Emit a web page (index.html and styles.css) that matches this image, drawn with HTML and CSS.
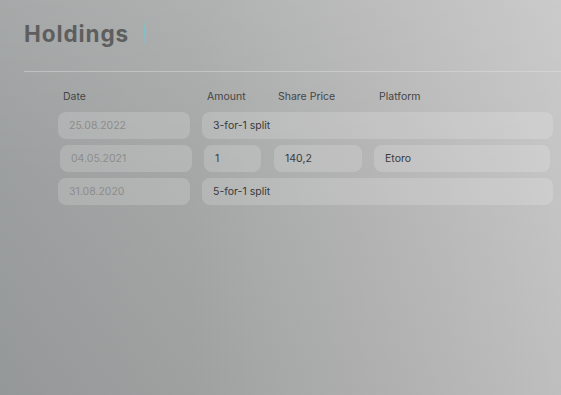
FILE: index.html
```html
<!DOCTYPE html>
<html lang="en">
<head>
<meta charset="utf-8">
<title>Holdings</title>
<link rel="stylesheet" href="styles.css">
</head>
<body>
  <main class="panel">
    <header class="title-bar">
      <h1 class="title">Holdings</h1>
      <span class="caret"></span>
    </header>
    <hr class="divider">
    <section class="holdings">
      <div class="head-row">
        <span class="col-date">Date</span>
        <span class="col-amount">Amount</span>
        <span class="col-price">Share Price</span>
        <span class="col-platform">Platform</span>
      </div>
      <div class="row">
        <div class="field date">25.08.2022</div>
        <div class="field wide">3-for-1 split</div>
      </div>
      <div class="row shifted">
        <div class="field date">04.05.2021</div>
        <div class="field amount">1</div>
        <div class="field price">140,2</div>
        <div class="field platform">Etoro</div>
      </div>
      <div class="row">
        <div class="field date">31.08.2020</div>
        <div class="field wide">5-for-1 split</div>
      </div>
    </section>
  </main>
</body>
</html>
```
FILE: styles.css
```css
html, body {
  margin: 0;
  height: 100%;
}

body {
  font-family: Inter, "Open Sans", sans-serif;
  background:
    linear-gradient(to bottom, rgba(255, 255, 255, 0.14), rgba(255, 255, 255, 0.04) 45%, rgba(0, 0, 0, 0.02)),
    linear-gradient(to right, #989b9b 0%, #a2a4a4 35%, #b1b1b1 65%, #c2c2c2 100%);
  overflow: hidden;
}

.panel {
  padding: 18px 0 0 24px;
}

.title-bar {
  display: flex;
  align-items: center;
  height: 30px;
}

.title {
  margin: 0;
  font-size: 22.5px;
  font-weight: 700;
  color: #5e5e5e;
  letter-spacing: 0.9px;
}

.caret {
  width: 2px;
  height: 22px;
  margin-left: 15px;
  background: linear-gradient(to bottom, rgba(120, 200, 210, 0.2), rgba(110, 200, 215, 0.85) 40%, rgba(120, 200, 210, 0.3));
}

.divider {
  margin: 23px 0 0 0;
  border: 0;
  height: 1px;
  background: rgba(230, 230, 230, 0.4);
}

.holdings {
  padding: 17px 0 0 34px;
  display: flex;
  flex-direction: column;
  gap: 6px;
}

.head-row {
  display: flex;
  font-size: 10.5px;
  color: #454545;
  height: 15px;
  align-items: center;
  margin-bottom: 2px;
}

.col-date { margin-left: 5px; width: 144px; }
.col-amount { width: 71px; }
.col-price { width: 101px; }

.row {
  display: flex;
  gap: 12px;
  height: 27px;
}

.row.shifted {
  margin-left: 2px;
}

.field {
  display: flex;
  align-items: center;
  padding-left: 11px;
  box-sizing: border-box;
  border-radius: 8px;
  background: rgba(255, 255, 255, 0.17);
  font-size: 10.5px;
  color: #3a3a3a;
}

.field.date {
  width: 132px;
  color: #8c8c8c;
}

.field.wide {
  width: 351px;
}

.field.amount {
  width: 57px;
}

.field.price {
  width: 88px;
  margin-left: 1px;
}

.field.platform {
  width: 176px;
}
```
